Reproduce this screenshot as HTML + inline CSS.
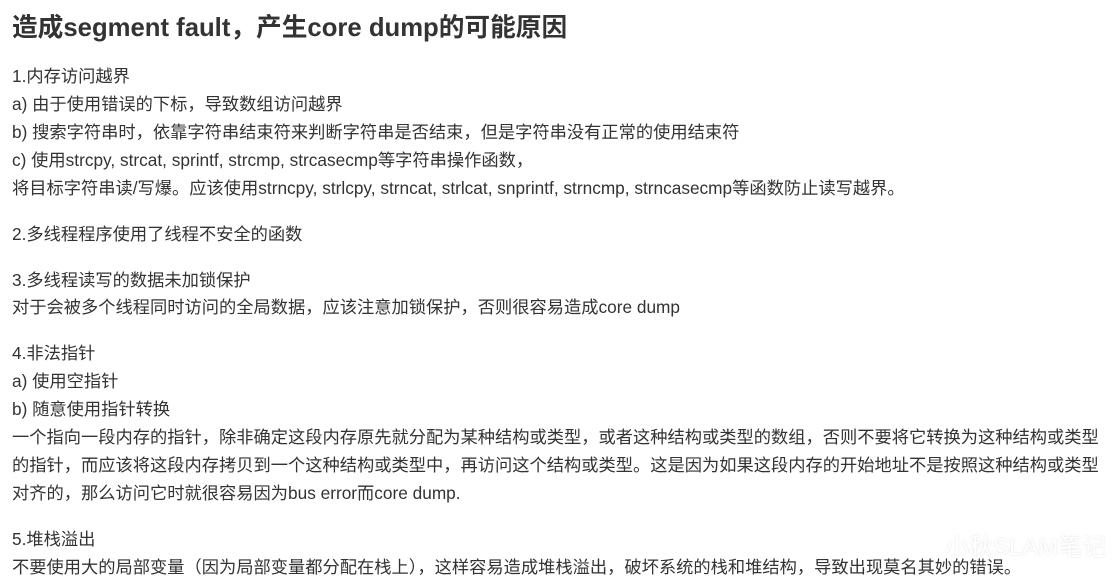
<!DOCTYPE html>
<html><head><meta charset="utf-8"><style>
html,body{margin:0;padding:0;background:#fff;width:1116px;height:588px;overflow:hidden}
body{font-family:"Liberation Sans","Noto Sans CJK SC",sans-serif;color:#333;}
h1{position:absolute;left:12px;top:12px;margin:0;font-size:25.7px;font-weight:bold;color:#333;line-height:32px;white-space:nowrap}
.l{position:absolute;left:12px;font-size:17.25px;line-height:28px;white-space:nowrap;color:#333}
.wm{position:absolute;left:945px;top:527px;font-size:24px;color:#fff;opacity:.9;text-shadow:0 0 2px #ddd;white-space:nowrap}
</style></head><body>
<h1>造成segment fault，产生core dump的可能原因</h1>
<div class="l" style="top:62px">1.内存访问越界</div>
<div class="l" style="top:90px">a) 由于使用错误的下标，导致数组访问越界</div>
<div class="l" style="top:118px">b) 搜索字符串时，依靠字符串结束符来判断字符串是否结束，但是字符串没有正常的使用结束符</div>
<div class="l" style="top:146px">c) 使用strcpy, strcat, sprintf, strcmp, strcasecmp等字符串操作函数，</div>
<div class="l" style="top:174px">将目标字符串读/写爆。应该使用strncpy, strlcpy, strncat, strlcat, snprintf, strncmp, strncasecmp等函数防止读写越界。</div>
<div class="l" style="top:220px">2.多线程程序使用了线程不安全的函数</div>
<div class="l" style="top:266px">3.多线程读写的数据未加锁保护</div>
<div class="l" style="top:293px">对于会被多个线程同时访问的全局数据，应该注意加锁保护，否则很容易造成core dump</div>
<div class="l" style="top:339px">4.非法指针</div>
<div class="l" style="top:367px">a) 使用空指针</div>
<div class="l" style="top:395px">b) 随意使用指针转换</div>
<div class="l" style="top:423px">一个指向一段内存的指针，除非确定这段内存原先就分配为某种结构或类型，或者这种结构或类型的数组，否则不要将它转换为这种结构或类型</div>
<div class="l" style="top:451px">的指针，而应该将这段内存拷贝到一个这种结构或类型中，再访问这个结构或类型。这是因为如果这段内存的开始地址不是按照这种结构或类型</div>
<div class="l" style="top:479px">对齐的，那么访问它时就很容易因为bus error而core dump.</div>
<div class="l" style="top:525px">5.堆栈溢出</div>
<div class="l" style="top:553px">不要使用大的局部变量（因为局部变量都分配在栈上），这样容易造成堆栈溢出，破坏系统的栈和堆结构，导致出现莫名其妙的错误。</div>
<div class="wm">小秋SLAM笔记</div>
</body></html>
